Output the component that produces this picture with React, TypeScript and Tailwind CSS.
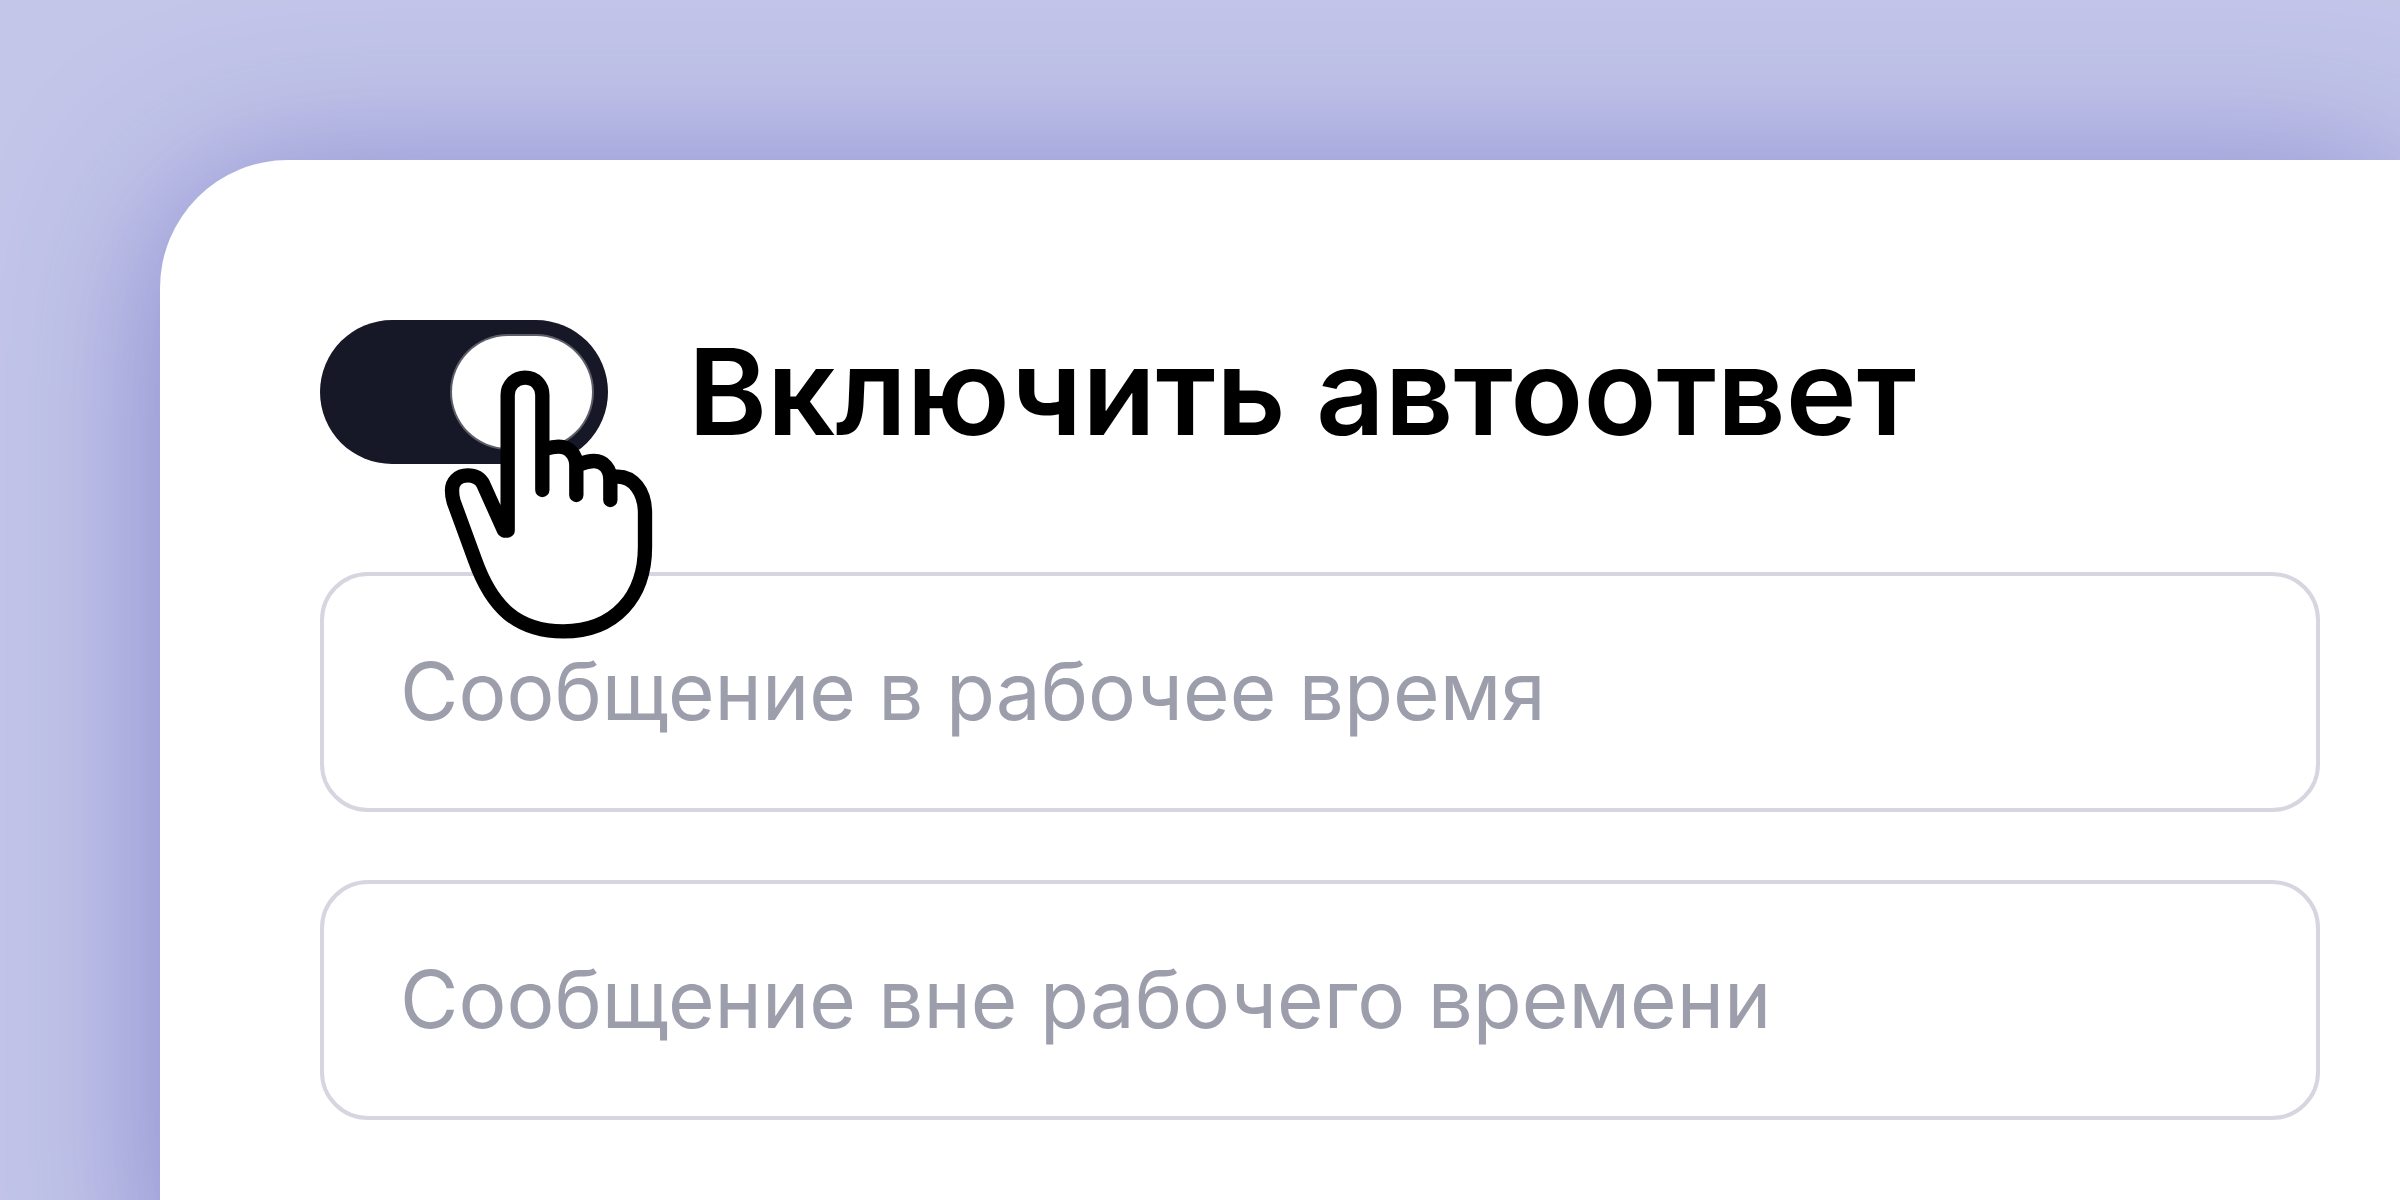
import { useState } from "react";

const fields = [
  { id: "work-message", placeholder: "Сообщение в рабочее время" },
  { id: "off-message", placeholder: "Сообщение вне рабочего времени" },
];

function HandCursor() {
  return (
    <svg
      className="pointer-events-none absolute left-[124px] top-[50px] z-10 h-[270px] w-[210px]"
      viewBox="432 210 630 810"
      fill="none"
      stroke="#000"
      strokeWidth="43"
      strokeLinecap="round"
      strokeLinejoin="round"
      aria-hidden="true"
    >
      {/* White fill of the whole hand */}
      <path
        fill="#fff"
        d="M727 570V285C727 256 706 233 675 233C645 233 623 256 623 285V691Q617 693 612 691L549 551C540 534 523 526 503 526C474 526 456 546 456 571Q456 590 461 605L525 780C575 920 650 994 790 994C945 994 1035 890 1035 740V640C1035 575 1000 527 945 531L931 533Q928 483 882 483Q866 483 829 493Q827 440 778 440Q758 440 727 447Z"
        stroke="none"
      />
      {/* Palm with thumb and index finger */}
      <path d="M727 570V285C727 256 706 233 675 233C645 233 623 256 623 285V691Q617 693 612 691L549 551C540 534 523 526 503 526C474 526 456 546 456 571Q456 590 461 605L525 780C575 920 650 994 790 994C945 994 1035 890 1035 740V640C1035 575 1000 527 948 530" />
      {/* Folded fingers */}
      <path d="M735 447Q758 440 776 440C808 440 829 465 829 497V585" />
      <path d="M840 493Q862 483 882 483C912 483 931 507 931 539V600" />
    </svg>
  );
}

function App() {
  const [enabled, setEnabled] = useState(true);

  return (
    <div className="h-screen overflow-hidden bg-[#c3c6e9] pl-40 pt-40 font-['Inter',sans-serif]">
      <form className="rounded-tl-[128px] bg-white py-40 pl-40 pr-20 shadow-[0_16px_160px_rgba(70,70,180,0.5)]">
        <div className="relative flex items-center gap-20">
          <input
            id="auto-reply"
            type="checkbox"
            role="switch"
            checked={enabled}
            onChange={(e) => setEnabled(e.target.checked)}
            className="flex h-36 w-72 shrink-0 cursor-pointer appearance-none items-center rounded-full bg-[#c4c4cf] p-4 before:h-28 before:w-[140px] before:rounded-full before:bg-white before:shadow-[0_0_0_2px_rgba(255,255,255,0.3)] checked:justify-end checked:bg-[#171827]"
          />
          <label
            htmlFor="auto-reply"
            className="whitespace-nowrap text-[120px] font-semibold leading-[144px] text-black"
          >
            Включить автоответ
          </label>
          <HandCursor />
        </div>

        <div className="mt-[108px] flex flex-col gap-[68px]">
          {fields.map((field) => (
            <input
              key={field.id}
              id={field.id}
              type="text"
              aria-label={field.placeholder}
              placeholder={field.placeholder}
              className="h-60 w-full rounded-[48px] border-4 border-[#d7d6e0] bg-white px-[76px] pb-1 text-[80px] text-[#171827] placeholder:text-[#9d9eac] focus:outline-none"
            />
          ))}
        </div>
      </form>
    </div>
  );
}

export default App;
